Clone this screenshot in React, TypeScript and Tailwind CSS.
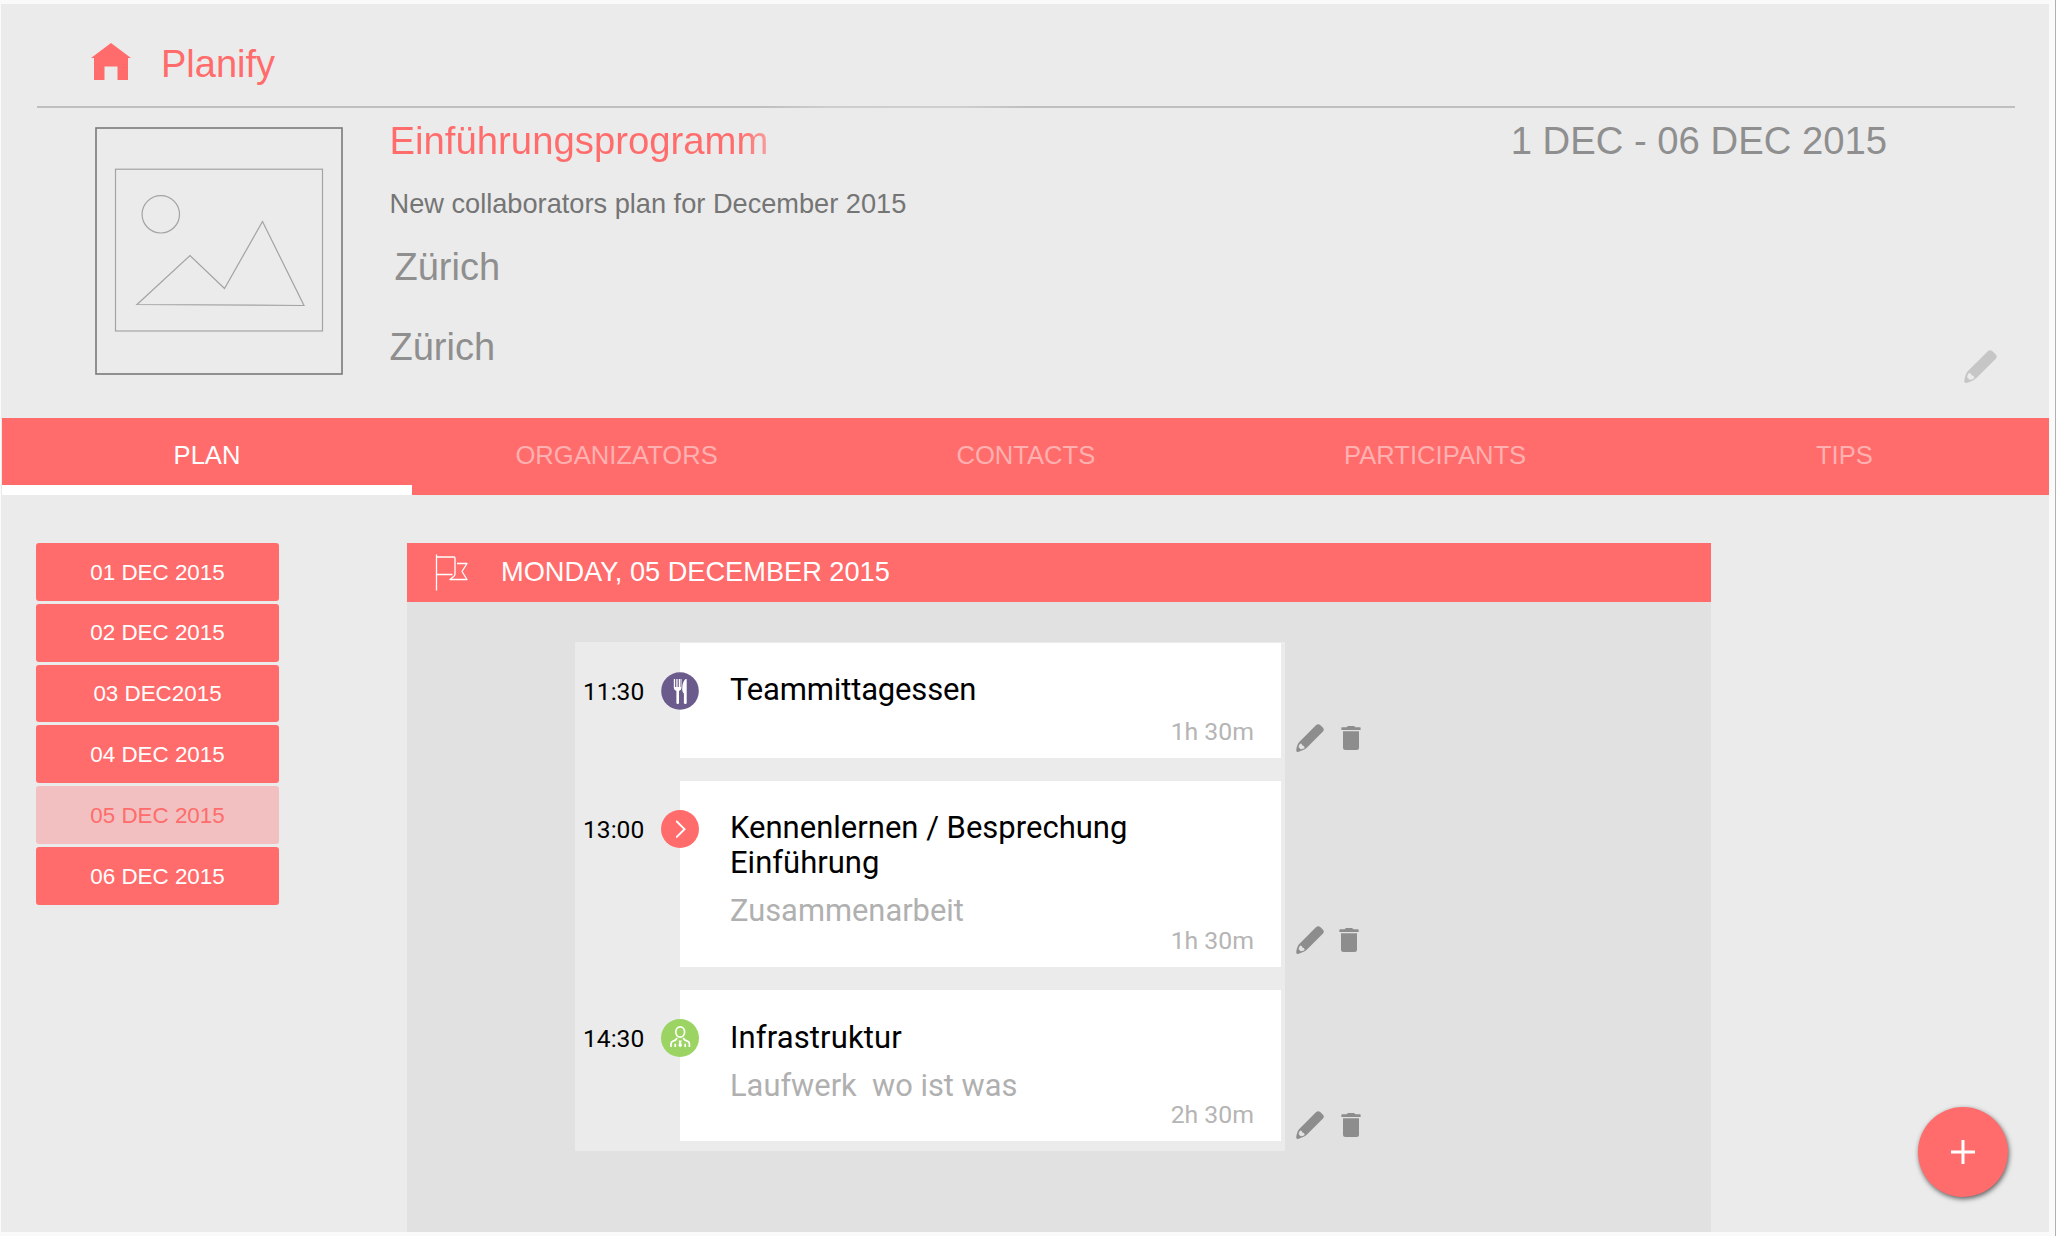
import React from "react";

type PencilProps = { className: string };

function Pencil({ className }: PencilProps) {
  return (
    <svg viewBox="0 0 28 28" preserveAspectRatio="none" className={className} fill="currentColor">
      <path
        fillRule="evenodd"
        d="M20.2 1 Q22.2 -.7 24.2 1 L27 3.8 Q28.6 5.6 27 7.4 L11 23.4 Q9 25.2 7.6 25.8 Q4.5 27.2 2 27.9 Q.2 28.2 .2 26.2 Q.6 22.6 2 19.8 Q2.6 18.6 4 17.2 Z M4.2 19.6 Q2.6 21.6 2.6 23.2 Q3.4 23.6 4.5 25.3 Q6.8 25.2 8.7 23.9 Q8.4 21.4 6.3 21.5 Q6.3 19.6 4.2 19.6 Z"
      />
    </svg>
  );
}

function Trash() {
  return (
    <svg viewBox="0 0 20 24" className="h-6 w-5 shrink-0" fill="currentColor">
      <path d="M1 1.2 H5.5 L7 0 H13 L14.5 1.2 H19 Q19.6 1.2 19.6 1.8 V4 H.4 V1.8 Q.4 1.2 1 1.2 Z M2 5.3 H18 V21.5 Q18 24 15.5 24 H4.5 Q2 24 2 21.5 Z" />
    </svg>
  );
}

function PlaceholderImage() {
  return (
    <svg viewBox="0 0 248 248" className="h-[248px] w-[248px] shrink-0" fill="none">
      <rect x="1" y="1" width="246" height="246" stroke="#7a7a7a" strokeWidth="1.6" />
      <g stroke="#a3a3a3" strokeWidth="1.2">
        <rect x="20.5" y="42.2" width="207" height="161.8" />
        <circle cx="65.8" cy="87.3" r="18.7" />
        <path d="M42 177.5 L95 128.5 L129.500 161.5 L167.500 94.500 L209 178.500 Z" />
      </g>
    </svg>
  );
}

const tabs = ["PLAN", "ORGANIZATORS", "CONTACTS", "PARTICIPANTS", "TIPS"];
const days = ["01 DEC 2015", "02 DEC 2015", "03 DEC2015", "04 DEC 2015", "05 DEC 2015", "06 DEC 2015"];

function Fork() {
  return (
    <svg viewBox="0 0 38 38" className="h-full w-full">
      <circle cx="19" cy="19" r="18.800" fill="#6b5b8c" />
      <path
        fill="#fff"
        d="M12.800 7 h1.300 v8 h1.200 v-8 h1.300 v8 h1.200 v-8 h1.300 v8 h.5 v-8 h.9 v9 q0 2.200-2.500 2.900 v12 q0 1-1.300 1 t-1.300-1 v-12 q-2.600-.7-2.600-2.900 Z M25.700 7 v23.900 q0 1-1.400 1 t-1.400-1 v-9.400 q-1.700-1.500-1.700-4 q0-7 2.800-10 q.7-.8 1.700-.5 Z"
      />
    </svg>
  );
}

function Arrow() {
  return (
    <svg viewBox="0 0 38 38" className="h-full w-full" fill="none">
      <circle cx="19" cy="19" r="19" fill="#ff6c6b" />
      <path d="M15.800 11.500 L23.500 19.200 L15.800 26.900" stroke="#fff" strokeWidth="1.900" strokeLinecap="round" />
    </svg>
  );
}

function Person() {
  return (
    <svg viewBox="0 0 38 38" className="h-full w-full" fill="none">
      <circle cx="19" cy="19" r="19" fill="#9bd463" />
      <g stroke="#fff" strokeWidth="1.700">
        <ellipse cx="19.200" cy="13" rx="4.400" ry="5.100" />
        <path d="M10 28 v-3.300 q0-2 2-2.600 q3.600-1 3.900-3.300 M28.400 28 v-3.300 q0-2-2-2.600 q-3.600-1-3.900-3.300 M14.200 28 v-3.200 M24.200 28 v-3.200" />
      </g>
      <path d="M17.600 21.500 h3.200 l-.6 2.300 l.8 3 l-1.800 1.500 l-1.800-1.500 l.8-3 Z" fill="#fff" />
    </svg>
  );
}

type Entry = {
  time: string;
  icon: React.ReactNode;
  title: string[];
  tracking: string;
  note?: string;
  duration: string;
  card: string;
  tools: string;
  gap: string;
};

const entries: Entry[] = [
  { time: "11:30", icon: <Fork />, title: ["Teammittagessen"], tracking: "pt-[29px] tracking-[-0.170px]", duration: "1h 30m", card: "h-[115px]", tools: "top-[81px]", gap: "gap-[17px]" },
  { time: "13:00", icon: <Arrow />, title: ["Kennenlernen / Besprechung", "Einführung"], tracking: "pt-[29px] tracking-normal", note: "Zusammenarbeit", duration: "1h 30m", card: "h-[186px]", tools: "top-[145px]", gap: "gap-[15px]" },
  { time: "14:30", icon: <Person />, title: ["Infrastruktur"], tracking: "pt-[30px] tracking-[0.120px]", note: "Laufwerk  wo ist was", duration: "2h 30m", card: "h-[151px]", tools: "top-[121px]", gap: "gap-[17px]" },
];

export default function App() {
  return (
    <div className="h-[1236px] w-[2056px] overflow-hidden border-r border-[#b0b0b0] bg-[#fafafa] pt-1 pl-px font-['Liberation_Sans',sans-serif]">
      <div className="relative flex h-[1228px] w-[2048px] flex-col bg-[#ebebeb]">
        <header className="h-[414px]">
          <div className="ml-9 flex h-[102px] w-[1978px] items-start pt-[38px] pl-[54px] text-[#ff6c6b]">
            <svg viewBox="0 0 40 37" className="mt-px h-[37px] w-10" fill="currentColor">
              <path d="M20 0 L40 15 H37 V37 H26.500 V23.500 H13.500 V37 H3 V15 H0 Z" />
            </svg>
            <span className="ml-[30px] text-[38px] leading-[44px]">Planify</span>
          </div>
          <div className="ml-9 h-0.5 w-[1978px] bg-[linear-gradient(90deg,#bfbfbf_0,#bfbfbf_730px,#cdcdcd_790px,#cfcfcf_920px,#bfbfbf_990px,#bfbfbf_100%)]" />
          <div className="flex pt-[19px] pl-[94px]">
            <PlaceholderImage />
            <div className="ml-[46.500px] flex flex-1 flex-col items-start whitespace-nowrap text-[#8f8f8f]">
              <h1 className="-mt-[8px] bg-[linear-gradient(90deg,#ff6c6b_350px,#f5acac_385px)] bg-clip-text text-[38.300px] leading-[44px] text-transparent">
                Einführungsprogramm
              </h1>
              <p className="mt-[25px] text-[27.200px] leading-[32px] text-[#757575]">New collaborators plan for December 2015</p>
              <p className="mt-[25px] ml-[5px] text-[38px] leading-[44px]">Zürich</p>
              <p className="mt-[36px] text-[38px] leading-[44px]">Zürich</p>
            </div>
            <div className="-mt-[8px] mr-[162px] text-[38.250px] leading-[44px] whitespace-nowrap text-[#8f8f8f]">1 DEC - 06 DEC 2015</div>
          </div>
        </header>
        <Pencil className="absolute top-[346px] left-[1962.500px] h-[33px] w-[33px] text-[#c6c6c6]" />

        <nav className="ml-px grid h-[77px] w-[2047px] shrink-0 grid-cols-[410px_repeat(4,1fr)] bg-[#ff6c6b]">
          {tabs.map((t, i) => (
            <div
              key={t}
              className={
                i === 0
                  ? "border-b-[10px] border-white pt-[21px] text-center text-[25.600px] leading-[32px] text-white"
                  : "pt-[21px] text-center text-[25.600px] leading-[32px] text-[#ffb0b0]"
              }
            >
              {t}
            </div>
          ))}
        </nav>

        <main className="flex min-h-0 flex-1 pt-12 pl-[35px]">
          <aside className="flex w-[243px] flex-col gap-[3px]">
            {days.map((d, i) => (
              <div
                key={d}
                className={
                  i === 4
                    ? "flex h-[57.800px] items-center justify-center rounded-[3px] bg-[#f2c0c0] pt-px text-[22.400px] text-[#ff6c6b]"
                    : "flex h-[57.800px] items-center justify-center rounded-[3px] bg-[#ff6c6b] pt-px text-[22.400px] text-white"
                }
              >
                {d}
              </div>
            ))}
          </aside>
          <section className="ml-[128px] w-[1304px] bg-[#e1e1e1]">
            <div className="flex h-[59px] items-center bg-[#ff6c6b] text-white">
              <svg viewBox="0 0 33 37" className="ml-[28px] h-[37px] w-[33px]" fill="none" stroke="#fff" strokeWidth="1.300" strokeLinejoin="round">
                <path d="M1.500 0.500 V36.500 M1.500 3 H19 Q20 3 20 4 V20 Q20 22 18 23 L15 25.500 H32 L27 17.500 L32 9.500 H22 M1.500 20.500 H17.500" />
              </svg>
              <span className="-mt-0.5 ml-[33px] text-[27.200px] leading-[32px]">MONDAY, 05 DECEMBER 2015</span>
            </div>
            <div className="mt-[40px] ml-[168px] flex h-[509px] w-[710px] flex-col gap-[23px] bg-[#ebebeb] pt-px font-[Roboto,sans-serif]">
              {entries.map((e) => (
                <div key={e.time} className="relative flex">
                  <div className="w-[105px] pt-[33px] pl-[8px] text-[24.600px] leading-[32px] text-black">{e.time}</div>
                  <div className={`${e.card} ${e.tracking} flex w-[601px] flex-col bg-white pr-[27px] pl-[50px]`}>
                    {e.title.map((t) => (
                      <div key={t} className="text-[31px] leading-[35px] whitespace-nowrap text-black">{t}</div>
                    ))}
                    {e.note && <div className="mt-[13px] text-[30.850px] leading-[35px] tracking-normal whitespace-pre text-[#b0b0b0]">{e.note}</div>}
                  </div>
                  <div className="absolute right-[31px] bottom-[10px] text-[24.800px] leading-[32px] text-[#b5b5b5]">{e.duration}</div>
                  <div className="absolute top-[28.500px] left-[86px] h-[38px] w-[38px]">{e.icon}</div>
                  <div className={`${e.tools} ${e.gap} absolute left-[721px] flex items-center text-[#8d8d8d]`}>
                    <Pencil className="h-7 w-7" />
                    <Trash />
                  </div>
                </div>
              ))}
            </div>
          </section>
        </main>

        <button className="absolute top-[1103px] left-[1916.500px] flex h-[90px] w-[90px] items-center justify-center rounded-full bg-[#ff6c6b] shadow-[1px_2px_5px_rgba(0,0,0,0.6)]">
          <svg viewBox="0 0 24 24" className="h-6 w-6" stroke="#fff" strokeWidth="3">
            <path d="M12 0 V24 M0 12 H24" />
          </svg>
        </button>
      </div>
    </div>
  );
}
